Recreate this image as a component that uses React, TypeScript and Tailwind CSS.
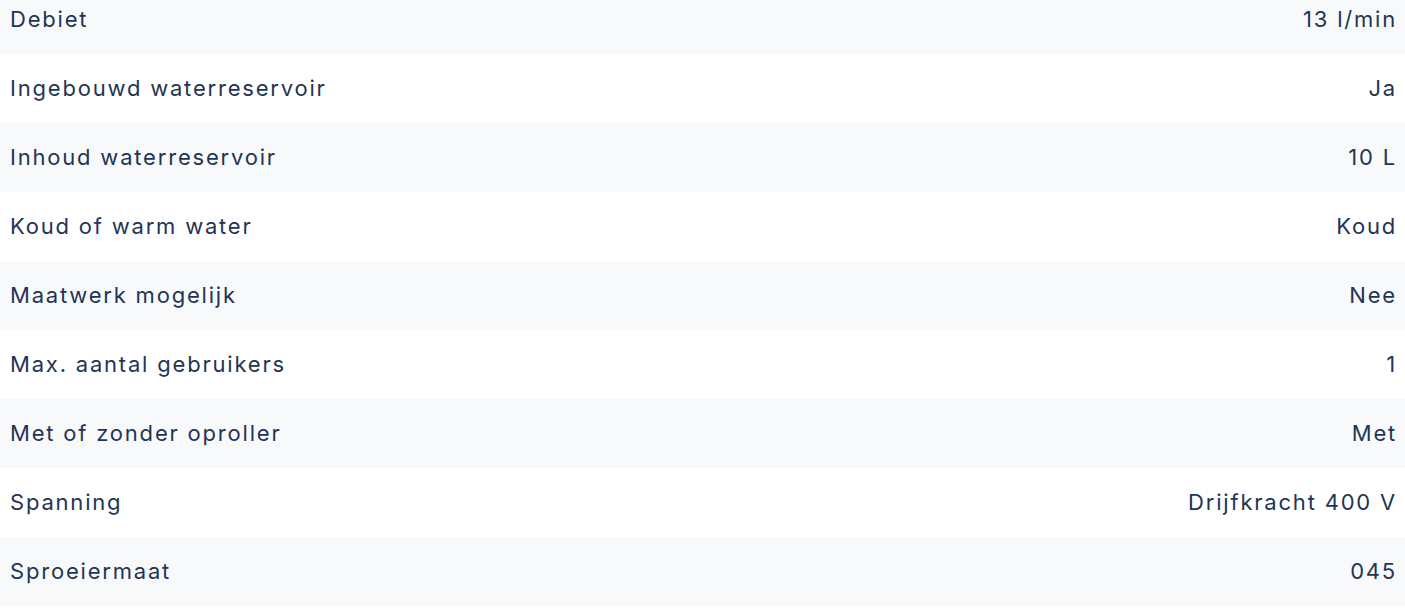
import React from "react";

const rows: [string, string][] = [
  ["Debiet", "13 l/min"],
  ["Ingebouwd waterreservoir", "Ja"],
  ["Inhoud waterreservoir", "10 L"],
  ["Koud of warm water", "Koud"],
  ["Maatwerk mogelijk", "Nee"],
  ["Max. aantal gebruikers", "1"],
  ["Met of zonder oproller", "Met"],
  ["Spanning", "Drijfkracht 400 V"],
  ["Sproeiermaat", "045"],
];

export default function App() {
  return (
    <div className="w-[1405px] h-[611px] overflow-hidden bg-white">
      <div className="-mt-[15px] flex flex-col text-[#1f3554] text-[22px] tracking-[1.8px] font-['Inter',sans-serif]">
        {rows.map(([k, v], i) => (
          <div
            key={k}
            className={`h-[69px] flex items-center justify-between px-[10px] ${i % 2 === 0 ? "bg-[#f8f9fb]" : "bg-white"}`}
          >
            <span>{k}</span>
            <span className="-mr-[2px]">{v}</span>
          </div>
        ))}
      </div>
    </div>
  );
}
